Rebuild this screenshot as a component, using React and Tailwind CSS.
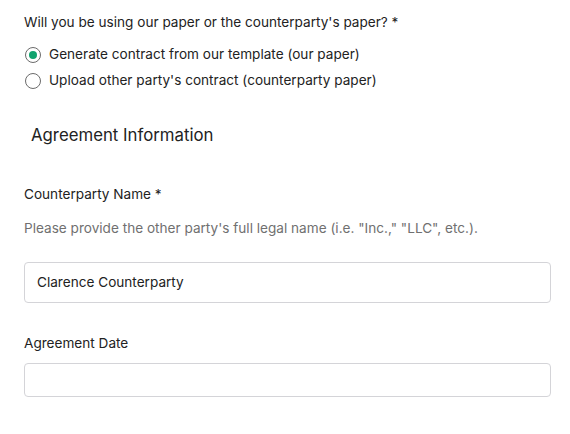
export default function App() {
  return (
    <div className="w-[570px] h-[434px] overflow-hidden bg-white text-[#222] font-['Inter',sans-serif] text-[13.6px]">
      <div className="pl-[24px] pr-[19px] pt-[14px]">
        <p className="leading-[17px]">Will you be using our paper or the counterparty's paper? *</p>

        <div className="mt-[15px] flex flex-col gap-[9px]">
          <label className="flex items-center gap-[8px] leading-[17px]">
            <span className="flex items-center justify-center w-[16px] h-[16px] rounded-full border border-[#6b6b6b] ml-[1px]">
              <span className="w-[8px] h-[8px] rounded-full bg-[#10a36e]" />
            </span>
            Generate contract from our template (our paper)
          </label>
          <label className="flex items-center gap-[8px] leading-[17px]">
            <span className="w-[16px] h-[16px] rounded-full border border-[#6b6b6b] ml-[1px]" />
            Upload other party's contract (counterparty paper)
          </label>
        </div>

        <h2 className="mt-[35px] ml-[7px] text-[16.8px] leading-[22px]">Agreement Information</h2>

        <p className="mt-[40px] leading-[17px]">Counterparty Name *</p>
        <p className="mt-[17px] leading-[17px] text-[#707070]">
          Please provide the other party's full legal name (i.e. "Inc.," "LLC", etc.).
        </p>

        <div className="mt-[25px] h-[41px] flex items-center px-[12px] rounded-[4px] border border-[#d4d4d8]">
          Clarence Counterparty
        </div>

        <p className="mt-[32px] leading-[17px]">Agreement Date</p>
        <div className="mt-[11px] h-[34px] rounded-[4px] border border-[#d4d4d8]" />

        <p className="mt-[35px] leading-[17px]">Description of agreement or other details</p>
      </div>
    </div>
  );
}
